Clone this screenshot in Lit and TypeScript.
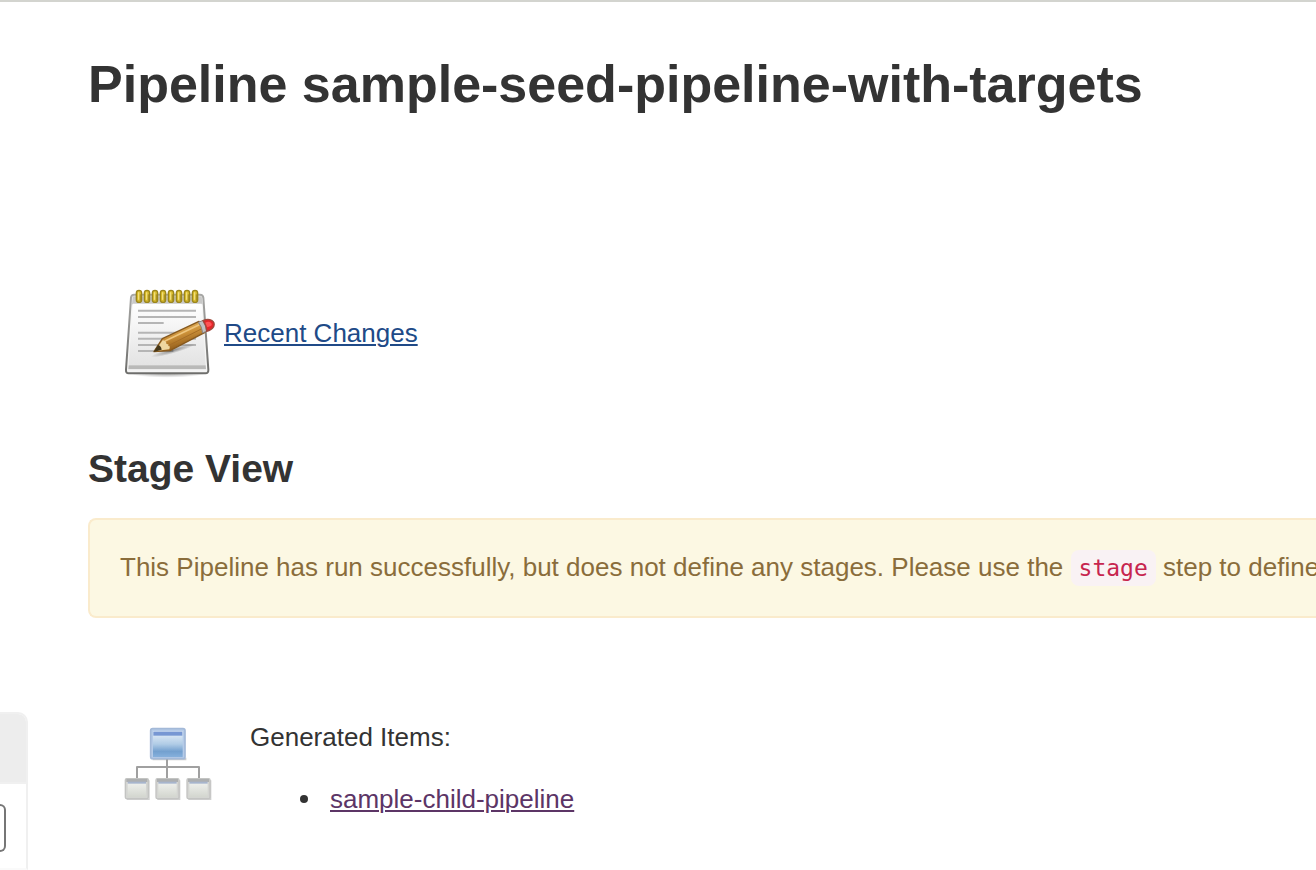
import { LitElement, html, css, svg } from "lit";
import { customElement } from "lit/decorators.js";

@customElement("notepad-icon")
class NotepadIcon extends LitElement {
  static styles = css`
    :host { display: block; flex: none; width: 96px; height: 96px; }
    svg { display: block; width: 100%; height: 100%; }
  `;

  render() {
    const rings = [87, 111, 135, 159, 183, 207, 231, 255];
    const lines = [[107, 258], [126, 258], [144, 161], [173, 258], [191, 258], [210, 258], [228, 190]];
    return html`
      <svg viewBox="30 30 288 288" aria-hidden="true">
        <defs>
          <linearGradient id="paper" x1="0" y1="0" x2="0" y2="1">
            <stop offset="0" stop-color="#ffffff" />
            <stop offset="1" stop-color="#e3e3e3" />
          </linearGradient>
          <linearGradient id="edge" x1="0" y1="0" x2="0" y2="1">
            <stop offset="0" stop-color="#a8a8a6" />
            <stop offset="1" stop-color="#6e6e6c" />
          </linearGradient>
          <linearGradient id="wood" x1="0" y1="0" x2="0.45" y2="1">
            <stop offset="0.2" stop-color="#e5b765" />
            <stop offset="0.55" stop-color="#cc9139" />
            <stop offset="0.9" stop-color="#96601c" />
          </linearGradient>
          <radialGradient id="shade">
            <stop offset="0" stop-color="#000" stop-opacity="0.4" />
            <stop offset="1" stop-color="#000" stop-opacity="0" />
          </radialGradient>
          <filter id="soft"><feGaussianBlur stdDeviation="1.8" /></filter>
        </defs>
        <g filter="url(#soft)">
          <ellipse cx="172" cy="294" rx="118" ry="14" fill="url(#shade)" />
          <path d="M72 59H270Q279 59 280 68L295 284Q296 295 286 295H56Q47 295 48 284L63 68Q64 59 72 59Z"
            fill="#f5f5f4" stroke="url(#edge)" stroke-width="6" />
          <path d="M68 64H275L278 88H66Z" fill="#c9c9c8" />
          <path d="M69 86H275L287 270H56Z" fill="url(#paper)" />
          <path d="M56 271H287L288 283H55Z" fill="#b9b9b8" />
          <path d="M54 286H289" stroke="#f3f3f3" stroke-width="5" />
          ${lines.map(([y, end]) => svg`<path d=${`M84 ${y}H${end}`} stroke="#b5b5b5" stroke-width="6" />`)}
          ${rings.map(
            (x) => svg`
              <rect x=${x - 8} y="46" width="16" height="36" rx="8" fill="#d8bb2b" stroke="#9b861e" stroke-width="4" />
              <path d=${`M${x - 1} 53V73`} stroke="#f1df7c" stroke-width="4" stroke-linecap="round" />
              <path d=${`M${x + 4} 58V77`} stroke="#6b5b12" stroke-opacity="0.5" stroke-width="3" />`
          )}
          <ellipse cx="190" cy="226" rx="70" ry="9" transform="rotate(-16 190 226)" fill="url(#shade)" />
          <path d="M132 230L157 191L267 139L285 172L180 227Z" fill="url(#wood)" stroke="#86591f" stroke-width="4" stroke-linejoin="round" />
          <path d="M135 228L158 196Q169 196 169 206Q183 210 178 223Z" fill="#efd7a0" />
          <path d="M131 231L144 210Q153 212 155 224Z" fill="#44391e" />
          <path d="M165 198L268 149" stroke="#efc67e" stroke-width="5" />
          <path d="M175 212L276 161" stroke="#a66d25" stroke-width="3" />
          <path d="M265 142L280 136Q290 148 290 168L278 174Q276 155 265 142Z" fill="#bfc1c4" stroke="#8b8484" stroke-width="3" />
          <path d="M279 137Q293 130 305 136Q316 143 311 155Q305 165 290 169Q289 151 279 137Z" fill="#e5262b" stroke="#9f493c" stroke-width="4" />
          <path d="M286 143Q295 137 303 143Q308 149 302 153L292 157Z" fill="#ff5355" />
        </g>
      </svg>
    `;
  }
}

@customElement("network-icon")
class NetworkIcon extends LitElement {
  static styles = css`
    :host { display: block; flex: none; width: 96px; height: 96px; }
    svg { display: block; width: 100%; height: 100%; }
  `;

  render() {
    return html`
      <svg viewBox="30 0 288 288" aria-hidden="true">
        <defs>
          <linearGradient id="screen" x1="0" y1="0" x2="0" y2="1">
            <stop offset="0" stop-color="#e9f1f9" />
            <stop offset="0.5" stop-color="#b0cce6" />
            <stop offset="0.78" stop-color="#73a0cf" />
            <stop offset="1" stop-color="#86b0dc" />
          </linearGradient>
          <linearGradient id="node" x1="0" y1="0" x2="0" y2="1">
            <stop offset="0" stop-color="#f2f3f0" />
            <stop offset="1" stop-color="#d3d6cf" />
          </linearGradient>
          <filter id="soft"><feGaussianBlur stdDeviation="1.8" /></filter>
        </defs>
        <g filter="url(#soft)">
          <path d="M171 132V192M81 192V156H267V192" fill="none" stroke="#a0a0a0" stroke-width="6" stroke-linejoin="round" />
          <path d="M128 134H227V128" fill="none" stroke="#999" stroke-opacity="0.5" stroke-width="4" />
          <rect x="122" y="41" width="103" height="90" rx="6" fill="#b5cbe8" stroke="#a3b9d8" stroke-width="5" />
          <rect x="129" y="49" width="89" height="77" fill="url(#screen)" />
          <rect x="130" y="50" width="87" height="12" fill="#7797d3" />
          ${[46, 138, 231].map(
            (x) => svg`
              <path d=${`M${x + 4} 253H${x + 71}V196`} fill="none" stroke="#888" stroke-opacity="0.4" stroke-width="4" />
              <rect x=${x} y="191" width="69" height="60" rx="4" fill="#d4d5d2" stroke="#c3c4c2" stroke-width="4" />
              <rect x=${x + 7} y="198" width="55" height="48" fill="url(#node)" />
              <rect x=${x + 3} y="192" width="63" height="9" fill="#adafb0" />
              <rect x=${x + 7} y="200" width="55" height="6" fill="#a7b5cd" />`
          )}
        </g>
      </svg>
    `;
  }
}

@customElement("app-root")
class AppRoot extends LitElement {
  static styles = css`
    :host {
      display: block;
      min-height: 100vh;
      background: #fff;
      color: #333;
      font: 26px/36px "Liberation Sans", Arial, sans-serif;
    }
    * { box-sizing: border-box; }
    .page {
      display: grid;
      grid-template-columns: 28px minmax(0, 1fr);
      min-height: 100vh;
      border-top: 2px solid #d3d4cf;
      overflow: hidden;
    }
    .side { display: flex; flex-direction: column; padding-top: 710px; }
    .panel {
      flex: 1;
      display: flex;
      flex-direction: column;
      border: 2px solid #f0f0f0;
      border-left: 0;
      border-bottom-color: #fafafa;
      border-radius: 0 10px 0 0;
      overflow: hidden;
    }
    .panel-head { height: 70px; background: #ededed; border-bottom: 2px solid #f0f0f0; }
    .panel-body { flex: 1; padding: 20px 20px 16px 0; }
    .search {
      display: block;
      width: 100%;
      height: 48px;
      padding: 0;
      border: 2px solid #767676;
      border-left: 0;
      border-radius: 0 6px 6px 0;
      background: #fff;
      font: inherit;
    }
    main { padding: 52px 0 0 60px; }
    h1, h2, p, ul { margin: 0; }
    h1 { font-size: 52px; line-height: 60px; }
    h2 { margin-top: 64px; font-size: 39px; line-height: 48px; }
    a { text-decoration-thickness: 2px; text-underline-offset: 2px; }
    .changes { display: flex; align-items: center; gap: 8px; margin-top: 171px; padding-left: 32px; }
    .changes a { color: #204a87; }
    .alert {
      margin-top: 25px;
      padding: 30px 0 32px 30px;
      border: 2px solid #faebcc;
      border-right: 0;
      border-radius: 8px 0 0 8px;
      background: #fcf8e3;
      color: #8a6d3b;
      line-height: 34px;
      white-space: nowrap;
      overflow: hidden;
    }
    code {
      padding: 5px 8px;
      border-radius: 8px;
      background: #f9f2f4;
      color: #c7254e;
      font: 23px/28px "DejaVu Sans Mono", monospace;
    }
    .generated { display: flex; gap: 34px; margin-top: 97px; padding-left: 32px; }
    .items { padding-top: 4px; }
    ul { margin-top: 26px; padding-left: 50px; list-style: none; }
    li { display: flex; align-items: center; gap: 22px; }
    li::before { content: ""; width: 8px; height: 8px; border-radius: 50%; background: #333; }
    .items a { color: #5c3566; }
  `;

  render() {
    return html`
      <div class="page">
        <aside class="side">
          <div class="panel">
            <div class="panel-head"></div>
            <div class="panel-body"><input class="search" type="text" aria-label="find" /></div>
          </div>
        </aside>
        <main>
          <h1>Pipeline sample-seed-pipeline-with-targets</h1>
          <div class="changes">
            <notepad-icon></notepad-icon>
            <a href="#changes">Recent Changes</a>
          </div>
          <h2>Stage View</h2>
          <div class="alert">This Pipeline has run successfully, but does not define any stages. Please use the <code>stage</code> step to define</div>
          <div class="generated">
            <network-icon></network-icon>
            <div class="items">
              <p>Generated Items:</p>
              <ul>
                <li><a href="#sample-child-pipeline">sample-child-pipeline</a></li>
              </ul>
            </div>
          </div>
        </main>
      </div>
    `;
  }
}
